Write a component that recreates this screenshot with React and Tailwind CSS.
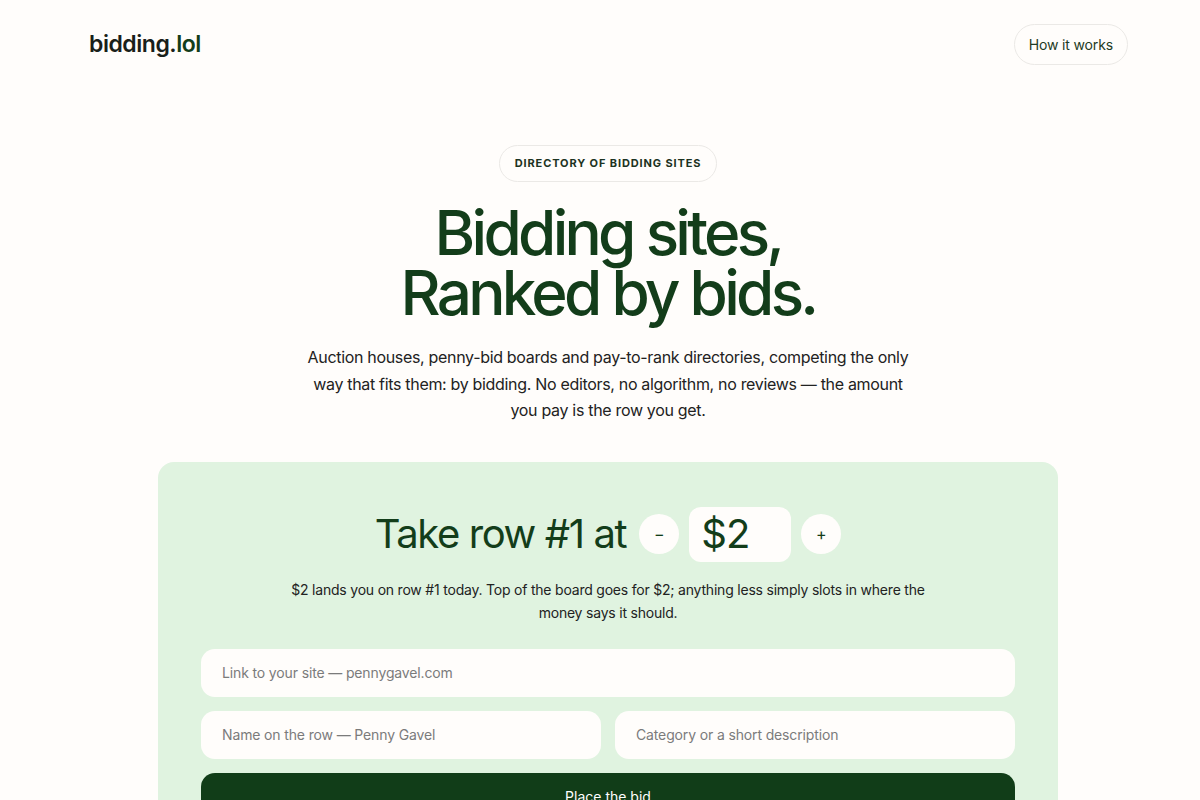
import React from 'react';

const font = { fontFamily: 'Inter, "Noto Sans", sans-serif' };

const Field = ({ placeholder, className = '' }) => (
  <input
    placeholder={placeholder}
    className={`h-12 rounded-[14px] bg-[#fffdfb] px-[21px] text-sm tracking-[-0.01em] text-[#222] placeholder:text-[#7b7b7b] outline-none ${className}`}
  />
);

const RoundBtn = ({ children }) => (
  <button className="flex h-10 w-10 items-center justify-center rounded-full bg-[#fffdfb] text-base text-[#133d1a]">
    {children}
  </button>
);

export default function App() {
  return (
    <div className="min-h-[800px] bg-[#fffdfb] pl-4 text-[#222]" style={font}>
      <header className="mx-auto flex w-[1040px] items-center justify-between pt-6">
        <a className="pl-px text-[23px] font-semibold tracking-[-0.02em] text-[#1a1f1a]">
          bidding.<span className="text-[#133d1a]">lol</span>
        </a>
        <button className="h-[41px] rounded-full border border-[#ebe9e6] px-[14px] text-sm tracking-[-0.01em] text-[#1e3b24]">
          How it works
        </button>
      </header>

      <main className="flex flex-col items-center pt-[80px]">
        <div className="flex h-[37px] items-center rounded-full border border-[#ebe9e6] px-[15px] text-[11px] font-bold uppercase tracking-[0.08em] text-[#1d3322]">
          Directory of bidding sites
        </div>

        <h1 className="mt-[21px] text-center text-[62px] font-[450] leading-[60px] tracking-[-0.06em] text-[#133d1a]">
          Bidding sites,
          <br />
          Ranked by bids.
        </h1>

        <p className="mt-[21px] max-w-[606px] text-center text-base leading-[26.5px] tracking-[-0.02em] text-[#222]">
          Auction houses, penny-bid boards and pay-to-rank directories, competing the only way that fits them: by bidding. No editors, no algorithm, no reviews — the amount you pay is the row you get.
        </p>

        <section className="mt-[38px] w-[900px] rounded-2xl bg-[#e0f3e0] px-[43px] pt-[45px] pb-10">
          <div className="flex items-center justify-center gap-[10px]">
            <h2 className="mr-[3px] text-[40px] font-normal leading-[48px] tracking-[-0.035em] text-[#133d1a]">
              Take row #1 at
            </h2>
            <RoundBtn>−</RoundBtn>
            <div className="flex h-[55px] w-[102px] items-center rounded-xl bg-[#fffdfb] px-3 text-[40px] tracking-[-0.02em] text-[#133d1a]">
              $2
            </div>
            <RoundBtn>+</RoundBtn>
          </div>

          <p className="mx-auto mt-[16px] max-w-[640px] text-center text-sm leading-[23px] tracking-[-0.015em] text-[#222]">
            $2 lands you on row #1 today. Top of the board goes for $2; anything less simply slots in where the money says it should.
          </p>

          <div className="mt-[25px] flex flex-col gap-[14px]">
            <Field placeholder="Link to your site — pennygavel.com" className="w-full" />
            <div className="grid grid-cols-2 gap-[14px]">
              <Field placeholder="Name on the row — Penny Gavel" />
              <Field placeholder="Category or a short description" />
            </div>
            <button className="h-12 w-full rounded-[14px] bg-[#113d18] text-sm text-white">
              Place the bid
            </button>
          </div>
        </section>
      </main>
    </div>
  );
}
